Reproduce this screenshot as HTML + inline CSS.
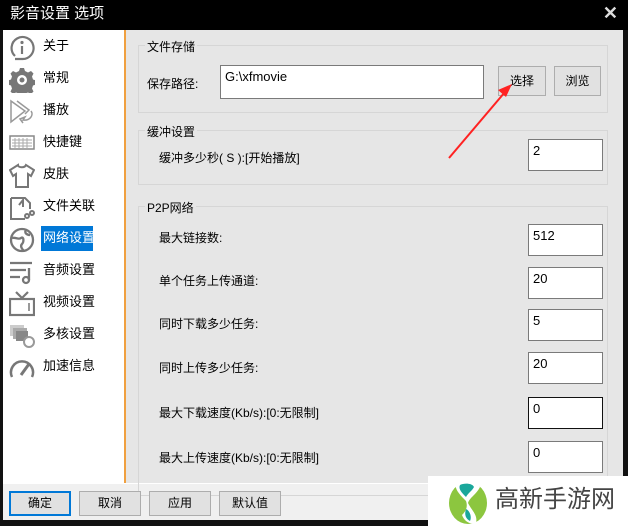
<!DOCTYPE html>
<html><head><meta charset="utf-8"><style>
*{margin:0;padding:0;box-sizing:border-box}
html,body{width:628px;height:526px;overflow:hidden}
body{background:#111;font-family:"Liberation Sans","Noto Sans CJK SC",sans-serif;font-size:12px;color:#000;position:relative;white-space:nowrap}
.abs{position:absolute}
.title{left:0;top:0;width:628px;height:30px;background:#000;color:#fff;font-size:15px;line-height:28px;padding-left:10px}
.left{left:3px;top:30px;width:122px;height:453px;background:#fff}
.orange{left:124px;top:30px;width:2px;height:453px;background:#f0a040}
.right{left:126px;top:30px;width:497px;height:453px;background:#e6e6e6}
.bottom{left:3px;top:483px;width:622px;height:37px;background:#f0f0f0;border-top:1px solid #fff}
.item{position:absolute;left:43px;font-size:13px;line-height:20px}
.grp{position:absolute;border:1px solid #d6d6d6}
.gl{position:absolute;font-size:12px;background:#e6e6e6;padding:0 2px}
.inp{position:absolute;background:#fff;border:1px solid #7a7a7a;font-size:13px;padding:3px 0 0 4px}
.btn{position:absolute;background:#e1e1e1;border:1px solid #adadad;text-align:center;font-size:12px}
.lbl{position:absolute;font-size:12px}
svg.ic{position:absolute;left:9px}
</style></head><body>
<div class="abs title">影音设置 选项</div>
<div class="abs" style="right:10px;top:3px;color:#ddd;font-size:18px;font-weight:bold">✕</div>
<div class="abs left"></div>
<div class="abs orange"></div>
<div class="abs right"></div>
<div class="abs bottom"></div>

<svg class="ic" style="top:35px" width="26" height="26" viewBox="0 0 26 26" fill="none" stroke="#777" stroke-width="2.2"><path d="M6 21A11 11 0 1 1 13 24H6"/><circle cx="13" cy="7.5" r="1.6" fill="#777" stroke="none"/><path d="M13 11v8"/></svg>
<svg class="ic" style="top:67px" width="26" height="26" viewBox="0 0 26 26"><path fill="#777" d="M11 1h4l1 3 3 1.5 3-1.5 2.5 2.5-1.5 3 1 3 3 1v4l-3 1-1 3 1.5 3-2.5 2.5-3-1.5-3 1-1 3h-4l-1-3-3-1-3 1.5-2.5-2.5 1.5-3-1-3-3-1v-4l3-1 1-3-1.5-3 2.5-2.5 3 1.5 3-1.5z"/><circle cx="13" cy="13" r="5" fill="#fff"/><circle cx="13" cy="13" r="2.5" fill="#777"/></svg>
<svg class="ic" style="top:99px" width="26" height="26" viewBox="0 0 26 26" fill="none" stroke="#999" stroke-width="1.5"><path d="M2 2l14 10-14 11z"/><path d="M8 2l12 9-4 4"/><path d="M22 12c3 4-1 10-8 9l2-3-5 2 3 4"/></svg>
<svg class="ic" style="top:133px" width="26" height="20" viewBox="0 0 26 20"><rect x="1" y="3" width="24" height="13" fill="none" stroke="#888" stroke-width="1.5"/><path d="M3 7h20M3 10h20M3 13h20M6 5v10M10 5v10M14 5v10M18 5v10" stroke="#aaa" stroke-width="1"/></svg>
<svg class="ic" style="top:163px" width="26" height="26" viewBox="0 0 26 26" fill="none" stroke="#777" stroke-width="2"><path d="M9 2l-8 5 3 6 3-2v13h12V11l3 2 3-6-8-5c-1 3-8 3-8 0z"/></svg>
<svg class="ic" style="top:195px" width="26" height="26" viewBox="0 0 26 26" fill="none" stroke="#777" stroke-width="2"><path d="M2 3h14l5 5v6M2 3v21h14M10 10l4-5v7"/><circle cx="18" cy="21" r="2"/><circle cx="23" cy="18" r="2"/></svg>
<svg class="ic" style="top:227px" width="26" height="26" viewBox="0 0 26 26" fill="none" stroke="#777" stroke-width="2.3"><circle cx="13" cy="13" r="11"/><path d="M3 11c4-1 6 2 9 0s3 4 1 6 0 5 2 7M17 3c-2 3 1 5 4 5"/></svg>
<svg class="ic" style="top:259px" width="26" height="26" viewBox="0 0 26 26" fill="none" stroke="#777" stroke-width="2.3"><path d="M1 4h22M1 11h16M1 18h10M20 9v12"/><circle cx="17" cy="21" r="3"/></svg>
<svg class="ic" style="top:291px" width="26" height="26" viewBox="0 0 26 26" fill="none" stroke="#777" stroke-width="2.2"><rect x="1" y="8" width="24" height="16"/><path d="M7 1l6 6 6-6"/><path d="M20 12v8" stroke-width="1.5"/></svg>
<svg class="ic" style="top:323px" width="26" height="26" viewBox="0 0 26 26"><rect x="1" y="2" width="14" height="11" fill="#ccc"/><rect x="4" y="5" width="14" height="11" fill="#aaa"/><rect x="7" y="8" width="12" height="10" fill="#888"/><circle cx="20" cy="19" r="5" fill="#fff" stroke="#999" stroke-width="2"/></svg>
<svg class="ic" style="top:355px" width="26" height="26" viewBox="0 0 26 26" fill="none" stroke="#777" stroke-width="2.5"><path d="M3 22A11 11 0 1 1 23 22"/><path d="M12 20l8-11" stroke-width="3"/></svg>

<div class="item" style="top:36px">关于</div>
<div class="item" style="top:68px">常规</div>
<div class="item" style="top:100px">播放</div>
<div class="item" style="top:132px">快捷键</div>
<div class="item" style="top:164px">皮肤</div>
<div class="item" style="top:196px">文件关联</div>
<div class="abs" style="top:226px;left:41px;width:52px;height:25px;background:#0078d7"></div>
<div class="item" style="top:228px;color:#fff">网络设置</div>
<div class="item" style="top:260px">音频设置</div>
<div class="item" style="top:292px">视频设置</div>
<div class="item" style="top:324px">多核设置</div>
<div class="item" style="top:356px">加速信息</div>

<div class="grp" style="left:138px;top:45px;width:470px;height:68px"></div>
<div class="gl" style="left:145px;top:38px">文件存储</div>
<div class="lbl" style="left:147px;top:75px">保存路径:</div>
<div class="inp" style="left:220px;top:65px;width:264px;height:34px">G:\xfmovie</div>
<div class="btn" style="left:498px;top:66px;width:48px;height:30px;line-height:28px">选择</div>
<div class="btn" style="left:554px;top:66px;width:47px;height:30px;line-height:28px">浏览</div>

<div class="grp" style="left:138px;top:130px;width:470px;height:55px"></div>
<div class="gl" style="left:145px;top:123px">缓冲设置</div>
<div class="lbl" style="left:159px;top:149px">缓冲多少秒( S ):[开始播放]</div>
<div class="inp" style="left:528px;top:139px;width:75px;height:32px">2</div>

<div class="grp" style="left:138px;top:206px;width:470px;height:290px"></div>
<div class="gl" style="left:145px;top:199px">P2P网络</div>
<div class="lbl" style="left:159px;top:229px">最大链接数:</div>
<div class="inp" style="left:528px;top:224px;width:75px;height:32px">512</div>
<div class="lbl" style="left:159px;top:272px">单个任务上传通道:</div>
<div class="inp" style="left:528px;top:267px;width:75px;height:32px">20</div>
<div class="lbl" style="left:159px;top:315px">同时下载多少任务:</div>
<div class="inp" style="left:528px;top:309px;width:75px;height:32px">5</div>
<div class="lbl" style="left:159px;top:359px">同时上传多少任务:</div>
<div class="inp" style="left:528px;top:352px;width:75px;height:32px">20</div>
<div class="lbl" style="left:159px;top:404px">最大下载速度(Kb/s):[0:无限制]</div>
<div class="inp" style="left:528px;top:397px;width:75px;height:32px;border-color:#111">0</div>
<div class="lbl" style="left:159px;top:449px">最大上传速度(Kb/s):[0:无限制]</div>
<div class="inp" style="left:528px;top:441px;width:75px;height:32px">0</div>

<svg class="abs" style="left:0;top:0" width="628" height="526"><line x1="449" y1="158" x2="505" y2="92" stroke="#f22" stroke-width="2"/><path d="M512 84l-14 6 8 7z" fill="#f22"/></svg>

<div class="btn" style="left:9px;top:491px;width:62px;height:25px;line-height:21px;border:2px solid #0078d7">确定</div>
<div class="btn" style="left:79px;top:491px;width:62px;height:25px;line-height:23px">取消</div>
<div class="btn" style="left:149px;top:491px;width:62px;height:25px;line-height:23px">应用</div>
<div class="btn" style="left:219px;top:491px;width:62px;height:25px;line-height:23px">默认值</div>

<div class="abs" style="left:428px;top:476px;width:200px;height:50px;background:#fff"></div>
<svg class="abs" style="left:446px;top:477px" width="44" height="48" viewBox="0 0 44 48"><ellipse cx="22" cy="26" rx="19" ry="21" fill="#8cc63f"/><path d="M10 6c8-6 20-4 24 4-4 8-10 10-12 16 4 8 10 12 8 20-6 2-12-2-14-8 4-4 6-8 4-14C14 18 8 12 10 6z" fill="#fff"/><path d="M14 8c4-2 12-2 14 2-2 4-6 6-8 10-4-4-8-8-6-12z" fill="#1aa79b"/><path d="M20 32c4 2 6 8 4 12-4-2-6-6-4-12z" fill="#1aa79b"/></svg>
<div class="abs" style="left:495px;top:484px;width:130px;font-size:24px;color:#444;line-height:32px;white-space:nowrap">高新手游网</div>
</body></html>
